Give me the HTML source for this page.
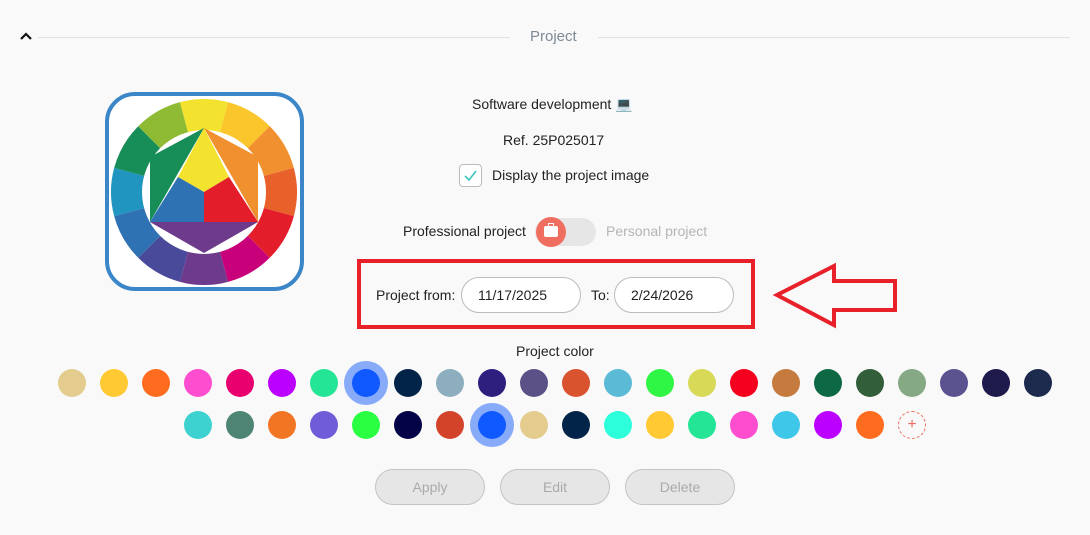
<!DOCTYPE html>
<html><head><meta charset="utf-8"><style>
body{margin:0;width:1090px;height:535px;background:#f9f9f9;font-family:"Liberation Sans",sans-serif;position:relative;overflow:hidden;color:#222}
.a{position:absolute}
.t{position:absolute;font-size:14px;white-space:nowrap}
.c{position:absolute;width:28px;height:28px;border-radius:50%}
.sel{box-shadow:0 0 0 8px #87aaf9}
.inp{position:absolute;height:34px;border:1px solid #bbb;border-radius:18px;background:#fff;font-size:14px;line-height:34px;box-sizing:border-box;padding-left:16px}
.btn{position:absolute;top:469px;width:110px;height:36px;border:1px solid #c4c4c4;border-radius:18px;background:#e6e6e6;color:#aaa;font-size:14px;text-align:center;line-height:35px;box-sizing:border-box}
</style></head><body>
<svg class="a" style="left:18px;top:30px" width="16" height="12"><path d="M3 9 L8 4 L13 9" stroke="#111" stroke-width="2.2" fill="none"/></svg>
<div class="a" style="left:38px;top:37px;width:472px;height:1px;background:#e2e2e2"></div>
<div class="a" style="left:598px;top:37px;width:472px;height:1px;background:#e2e2e2"></div>
<div class="t" style="left:530px;top:28px;color:#7f8a96;font-size:15px">Project</div>

<div class="a" style="left:105px;top:92px;width:191px;height:191px;border:4px solid #3a86c8;border-radius:30px;background:#fff"></div>
<svg class="a" style="left:0;top:0" width="320" height="300">
<g id="w"></g>
<circle cx="204" cy="192" r="62" fill="#fff"/>
<polygon points="204,128 150,157 150,222" fill="#178e58"/>
<polygon points="204,128 258,157 258,222" fill="#f0902f"/>
<polygon points="150,222 258,222 204,253" fill="#6d3a8c"/>
<polygon points="204,128 229,177 204,192 178,177" fill="#f3e22e"/>
<polygon points="229,177 258,222 204,222 204,192" fill="#e31d2a"/>
<polygon points="178,177 204,192 204,222 150,222" fill="#2f72b3"/>
</svg>
<script>
var cols=["#f3e22e","#fbc52c","#f0902f","#e8612b","#e31d2a","#c8007a","#6d3a8c","#4a4a9a","#2f72b3","#1f95c0","#178e58","#8fbb34"];
var g=document.getElementById('w'),s='';
for(var i=0;i<12;i++){var a1=(i*30-15-90)*Math.PI/180,a2=(i*30+15-90)*Math.PI/180,R=93;
s+='<path d="M204 192 L'+(204+R*Math.cos(a1))+' '+(192+R*Math.sin(a1))+' A'+R+' '+R+' 0 0 1 '+(204+R*Math.cos(a2))+' '+(192+R*Math.sin(a2))+' Z" fill="'+cols[i]+'"/>';}
g.innerHTML=s;
</script>

<div class="t" style="left:472px;top:96px">Software development 💻</div>
<div class="t" style="left:503px;top:132px">Ref. 25P025017</div>
<div class="a" style="left:459px;top:164px;width:21px;height:21px;border:1px solid #bbb;border-radius:4px;background:#fff"></div>
<svg class="a" style="left:459px;top:164px" width="23" height="23"><path d="M6 12 L10 16 L17 7" stroke="#3cc6c0" stroke-width="1.6" fill="none"/></svg>
<div class="t" style="left:492px;top:167px">Display the project image</div>

<div class="t" style="left:403px;top:223px">Professional project</div>
<div class="a" style="left:535px;top:218px;width:61px;height:28px;border-radius:14px;background:#e6e6e6"></div>
<div class="a" style="left:536px;top:217px;width:30px;height:30px;border-radius:50%;background:#ef6e5f"></div>
<div class="a" style="left:544px;top:226px;width:14px;height:11px;background:#fff;border-radius:2px"></div>
<div class="a" style="left:548px;top:223px;width:4px;height:2px;border:1.5px solid #fff;border-bottom:none"></div>
<div class="t" style="left:606px;top:223px;color:#b5b5b5">Personal project</div>

<div class="a" style="left:357px;top:259px;width:390px;height:62px;border:4px solid #e8202a"></div>
<div class="t" style="left:376px;top:287px">Project from:</div>
<div class="inp" style="left:461px;top:277px;width:120px;height:36px">11/17/2025</div>
<div class="t" style="left:591px;top:287px">To:</div>
<div class="inp" style="left:614px;top:277px;width:120px;height:36px">2/24/2026</div>
<svg class="a" style="left:770px;top:260px" width="130" height="70"><polygon points="7,35 64,6 64,21 125,21 125,50 64,50 64,65" fill="none" stroke="#e8202a" stroke-width="4"/></svg>

<div class="t" style="left:516px;top:343px">Project color</div>
<div id="cc"></div>
<script>
var r1=["#e3cc8d","#ffc933","#ff6b1f","#ff4dcf","#e8006e","#bb00ff","#24e496","#1058ff","#032449","#8daebe","#2e1f7f","#5b5187","#d9532f","#5bbbd6","#2ff545","#d8da57","#f5001e","#c67b3e","#0c6944","#335e3a","#84a984","#5b5290","#1f1a4c","#1c2a4e"];
var r2=["#3dd2d0","#4d8473","#f17522","#705cd8","#2aff42","#050347","#d2432a","#1058ff","#e3cc8d","#032449","#2cffd9","#ffc933","#24e496","#ff4dcf","#3ec7e9","#bb00ff","#ff6b1f"];
var h='';
r1.forEach(function(c,i){h+='<div class="c'+(i==7?' sel':'')+'" style="left:'+(58+i*42)+'px;top:369px;background:'+c+'"></div>';});
r2.forEach(function(c,i){h+='<div class="c'+(i==7?' sel':'')+'" style="left:'+(184+i*42)+'px;top:411px;background:'+c+'"></div>';});
h+='<div class="c" style="left:898px;top:411px;border:1px dashed #ef6e5f;box-sizing:border-box;color:#ef6e5f;text-align:center;line-height:25px;font-size:16px">+</div>';
document.getElementById('cc').innerHTML=h;
</script>

<div class="btn" style="left:375px">Apply</div>
<div class="btn" style="left:500px">Edit</div>
<div class="btn" style="left:625px">Delete</div>
</body></html>
